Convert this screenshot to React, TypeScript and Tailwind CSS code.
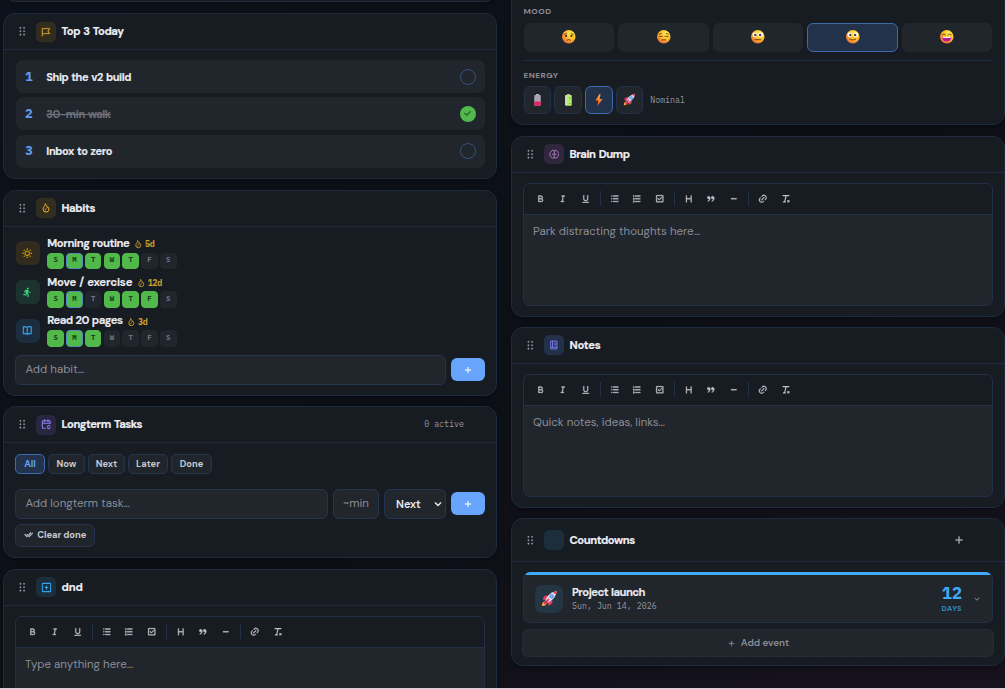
import React from "react";
import {
  RiDraggable, RiFlag2Line, RiSunLine, RiRunLine, RiBookOpenLine,
  RiCheckDoubleLine, RiBold, RiItalic, RiUnderline, RiListUnordered, RiListOrdered, RiCheckboxLine,
  RiHeading, RiDoubleQuotesR, RiSubtractLine, RiLink,
  RiAddLine, RiCheckLine, RiArrowDownSLine,
} from "react-icons/ri";

type Kids = { children?: React.ReactNode };

function Glyph({ className = "size-[10px]", children }: Kids & { className?: string }) {
  return (
    <svg viewBox="0 0 24 24" className={className} fill="none" stroke="currentColor" strokeWidth="2.4" strokeLinecap="round" strokeLinejoin="round">
      {children}
    </svg>
  );
}

function Flame({ className }: { className?: string }) {
  return (
    <Glyph className={className}>
      <path d="M10.500 2.500C11.500 6.500 5 9 5 15a7 6.800 0 0 0 14 0c0-2.500-1-4.500-2.500-5.500-.5 1-1.200 1.500-2 1.800C15 7.500 13.500 4 10.500 2.500z" />
      <path d="M12.500 13.500c-2 .8-2.800 2-2.500 3.500" />
    </Glyph>
  );
}

function CalendarEdit() {
  return (
    <Glyph className="size-[10.500px]">
      <path d="M10 21H4.500A1.500 1.500 0 0 1 3 19.500v-14A1.500 1.500 0 0 1 4.500 4h15A1.500 1.500 0 0 1 21 5.500V11M3 9.500h18M8 2v4M16 2v4" />
      <path d="M14.500 18a3.200 3.200 0 0 1 5.500-2M20.500 19a3.200 3.200 0 0 1-5.500 2" />
    </Glyph>
  );
}

function Brain() {
  return (
    <Glyph className="size-[10.500px]">
      <path strokeWidth="2" d="M12 4v16M12 4.500A3.500 3.500 0 0 0 5.500 6 4 4 0 0 0 2.500 12a4 4 0 0 0 3 6A3.500 3.500 0 0 0 12 19.500M12 4.500A3.500 3.500 0 0 1 18.500 6a4 4 0 0 1 3 6 4 4 0 0 1-3 6A3.500 3.500 0 0 1 12 19.500M7.500 12h9" />
    </Glyph>
  );
}

function Notebook() {
  return (
    <Glyph>
      <path strokeWidth="2.200" d="M5 2.500h14v19H5zM8.500 2.500v15M12.500 7.500H16M12.500 11.500H16M5 17.500h14" />
    </Glyph>
  );
}

function BoxPlus() {
  return (
    <Glyph className="size-[11px]">
      <rect x="3" y="3" width="18" height="18" rx="1.500" strokeWidth="2.200" />
      <path d="M12 9v6M9 12h6" strokeWidth="2.200" />
    </Glyph>
  );
}

function ClearFormat({ className }: { className?: string }) {
  return (
    <Glyph className={className}>
      <path d="M5 4h15M13 4l-4 16M6 20h5M17 16.500l3.500 3.500M20.500 16.500l-3.500 3.500" strokeWidth="2.800" />
    </Glyph>
  );
}

function Card({ className, children }: Kids & { className: string }) {
  return (
    <section className={"shrink-0 rounded-[12px] border border-[#1e2a3e] bg-[#171b22] shadow-[0_2px_6px_rgba(0,0,0,0.35)] " + className}>
      {children}
    </section>
  );
}

function Head({ icon, tint, title, right, tall, track }: { icon: React.ReactNode; tint: string; title: string; right?: React.ReactNode; tall?: boolean; track: string }) {
  return (
    <header className={"flex items-center border-b border-[#1e2a3e] pl-[12px] " + (tall ? "h-[43px]" : "h-[36px]")}>
      <RiDraggable className="size-[12.500px] stroke-[0.600] text-[#9a9da6]" />
      <span className={"ml-[7.500px] flex size-[20px] items-center justify-center rounded-[5px] text-[10px] " + tint}>{icon}</span>
      <h2 className={"ml-[5.500px] text-[11.200px] font-bold text-[#eceef4] [-webkit-text-stroke:0.200px] [word-spacing:1px] " + track}>{title}</h2>
      {right}
    </header>
  );
}

function Task({ n, text, done, track }: { n: number; text: string; done?: boolean; track: string }) {
  return (
    <li className="flex h-[33px] items-center rounded-[7px] bg-[#21252c] pr-[9px] pl-[9.500px]">
      <span className="w-[21.300px] font-mono text-[12.800px] leading-[16px] font-bold text-[#5f9cf0]">{n}</span>
      <span className={"flex-1 pt-px text-[11px] [word-spacing:0.800px] " + track + (done ? " font-bold text-[#6f727a] line-through" : " font-bold text-[#e8eaf0] [-webkit-text-stroke:0.150px]")}>{text}</span>
      {done ? (
        <span className="flex size-[16px] items-center justify-center rounded-full bg-[#51b84a] text-[#1b4a20]">
          <RiCheckLine className="size-[9px] stroke-1" />
        </span>
      ) : (
        <span className="size-[16px] rounded-full border-[1.300px] border-[#35507c]" />
      )}
    </li>
  );
}

const DAYS = ["S", "M", "T", "W", "T", "F", "S"];

function Habit({ icon, tint, name, streak, on, track }: { icon: React.ReactNode; tint: string; name: string; streak: string; on: number[]; track: string }) {
  return (
    <li className="flex h-[38.800px] items-start">
      <span className={"mt-[5px] flex size-[24px] items-center justify-center rounded-[6px] text-[10.500px] " + tint}>{icon}</span>
      <div className="ml-[7.800px]">
        <div className="flex h-[16.500px] items-center">
          <span className={"text-[11.300px] font-bold text-[#e8eaf0] [-webkit-text-stroke:0.150px] [word-spacing:0.800px] " + track}>{name}</span>
          <Flame className="ml-[5px] size-[8.500px] text-[#d4a72c]" />
          <span className="ml-[2px] font-mono text-[8.300px] leading-[12px] font-bold tracking-[-0.200px] text-[#c99f2c]">{streak}</span>
        </div>
        <div className="flex gap-[2.200px]">
          {DAYS.map((d, i) => (
            <span
              key={i}
              className={
                "flex size-[16.600px] items-center justify-center rounded-[4px] border font-mono text-[7.200px] font-bold " +
                (on.includes(i)
                  ? i === 1
                    ? "border-[#4d90b8] bg-[#51b84a] text-[#173f1a]"
                    : "border-[#51b84a] bg-[#51b84a] text-[#173f1a]"
                  : "border-[#21252c] bg-[#21252c] text-[#71757e]")
              }
            >
              {d}
            </span>
          ))}
        </div>
      </div>
    </li>
  );
}

function Field({ className, children }: Kids & { className: string }) {
  return <div className={"flex h-[30px] items-center rounded-[6px] border border-[#253450] bg-[#21252c] pt-px text-[11.500px] text-[#8a8e98] " + className}>{children}</div>;
}

function AddButton() {
  return (
    <button className="ml-[5px] flex h-[23.500px] w-[34px] items-center justify-center rounded-[6px] bg-[#67a5fc] text-white">
      <RiAddLine className="size-[10px] stroke-[0.500]" />
    </button>
  );
}

const TOOLS = [
  [RiBold, RiItalic, RiUnderline],
  [RiListUnordered, RiListOrdered, RiCheckboxLine],
  [RiHeading, RiDoubleQuotesR, RiSubtractLine],
  [RiLink, ClearFormat],
];

function Editor({ placeholder }: { placeholder: string }) {
  return (
    <div className="mx-[11px] mt-[10px] h-[123px] overflow-hidden rounded-[7px] border border-[#22304a] bg-[#21252c]">
      <div className="flex h-[31px] items-center border-b border-[#22304a] bg-[#171b22] pl-[5.300px]">
        {TOOLS.map((group, g) => (
          <React.Fragment key={g}>
            {g > 0 && <span className="mx-[2.800px] h-[15px] w-px bg-[#22304a]" />}
            {group.map((Icon, i) => (
              <span key={i} className="flex w-[22.500px] justify-center text-[#c0c3ca]">
                <Icon className="size-[9.500px] stroke-[0.900]" />
              </span>
            ))}
          </React.Fragment>
        ))}
      </div>
      <p className="pt-[9px] pl-[9px] text-[11.500px] leading-[16px] text-[#8a8e98]">{placeholder}</p>
    </div>
  );
}

function Face({ kind }: { kind: number }) {
  const id = "face" + kind;
  const ink = "#5c3a26";
  return (
    <svg viewBox="0 0 32 32" className="size-[15.500px]">
      <defs>
        <radialGradient id={id} cx="0.68" cy="0.25" r="0.85">
          <stop offset="0" stopColor="#fff04e" />
          <stop offset="0.55" stopColor="#ffb928" />
          <stop offset="1" stopColor="#e8603c" />
        </radialGradient>
      </defs>
      <circle cx="16" cy="16" r="14" fill={`url(#${id})`} />
      <g fill="none" stroke={ink} strokeWidth="1.8" strokeLinecap="round">
        {kind === 0 && (<><path d="M6.500 11.500l5-2.500M25.500 11.500l-5-2.500M12 23q4-3 8 0" /><circle cx="10.500" cy="14.500" r="2.400" fill={ink} stroke="none" /><circle cx="21.500" cy="14.500" r="2.400" fill={ink} stroke="none" /></>)}
        {kind === 1 && <path d="M6.5 15q3.500 2 7 0M18.500 15q3.500 2 7 0M7 10.500l4-1M25 10.500l-4-1M12 22.500h8" />}
        {(kind === 2 || kind === 3) && (<><g stroke="none"><circle cx="10" cy="12" r="5" fill="#fff" /><circle cx="22" cy="12" r="5" fill="#fff" /><circle cx="11" cy="12.5" r="2.5" fill={ink} /><circle cx="21" cy="12.5" r="2.5" fill={ink} /></g><path d={kind === 2 ? "M10 22h12" : "M10 21q6 4 12 0"} /></>)}
        {kind === 4 && (<><path d="M6.5 12q3.5-4 7 0M18.5 12q3.5-4 7 0" /><path d="M6.5 16.5h19q-1 9.500-9.500 9.500t-9.500-9.500z" fill="#b5179a" stroke="none" /><path d="M8 16.500h16v2h-16z" fill="#fff" stroke="none" /></>)}
      </g>
    </svg>
  );
}

function Battery({ low }: { low?: boolean }) {
  return (
    <svg viewBox="0 0 14 24" className="h-[12px] w-[7px]">
      <rect x="4" y="0" width="6" height="4" fill="#b9b3c6" />
      <rect x="0.500" y="2" width="13" height="21.500" rx="1.500" fill={low ? "#a9a3b4" : "#b4ec6a"} />
      {low ? <rect x="0.500" y="15" width="13" height="8.500" rx="1.500" fill="#e0245e" /> : <path d="M0.500 3v19h3V3z" fill="#d5dccf" />}
      {!low && <path d="M8 8h3M9.500 6.500v3M8 19h3" stroke="#5a9a35" strokeWidth="1" />}
    </svg>
  );
}

function Bolt() {
  return (
    <svg viewBox="0 0 16 24" className="h-[12px] w-[8px]">
      <defs><linearGradient id="bolt" x1="0" y1="0" x2="0" y2="1"><stop offset="0" stopColor="#ffb02e" /><stop offset="1" stopColor="#f0562a" /></linearGradient></defs>
      <path d="M9 0L1 13h5.500L5 24l10-14H9.500L11 0z" fill="url(#bolt)" />
    </svg>
  );
}

function Rocket({ className }: { className: string }) {
  return (
    <svg viewBox="0 0 32 32" className={className}>
      <path d="M2 30q-1-6 4-9l5 5q-3 5-9 4z" fill="#ff9f2e" />
      <path d="M12 10q-7 0-9 8l7 1zM22 20q0 7-8 9l-1-7z" fill="#ee3a6a" />
      <path d="M8 20Q13 5 30 2q-3 17-18 22z" fill="#e4dfec" />
      <path d="M23 4.500Q26 2.500 30 2q-.5 4-2.500 7z" fill="#f0415c" />
      <circle cx="20" cy="12" r="4" fill="#4a7fd6" /><circle cx="20" cy="12" r="2.200" fill="#8fc7f5" />
      <path d="M7 25l7-7" stroke="#e02f68" strokeWidth="3.500" strokeLinecap="round" />
    </svg>
  );
}

function Left() {
  const pill = "flex h-[20px] items-center justify-center rounded-[5px] border ";
  const idle = "border-[#253450] bg-[#20242b] ";
  return (
    <div className="flex w-[494px] shrink-0 flex-col">
      <Card className="-mt-[38px] h-[40px]" />
      <Card className="mt-[11px] h-[166px]">
        <Head icon={<RiFlag2Line className="stroke-[0.500]" />} tint="bg-[#332d20] text-[#d4a72c]" title="Top 3 Today" track="tracking-[-0.430px]" />
        <ol className="flex flex-col gap-[4.300px] px-[11.500px] pt-[10px]">
          <Task n={1} text="Ship the v2 build" track="tracking-[-0.420px]" />
          <Task n={2} text="30-min walk" done track="tracking-[-0.380px]" />
          <Task n={3} text="Inbox to zero" track="tracking-[-0.400px]" />
        </ol>
      </Card>
      <Card className="mt-[10.500px] h-[206px]">
        <Head icon={<Flame />} tint="bg-[#332d20] text-[#e5b02c]" title="Habits" track="tracking-[-0.380px]" />
        <ul className="h-[128px] px-[11.500px] pt-[9.500px]">
          <Habit icon={<RiSunLine className="stroke-[0.500]" />} tint="bg-[#302b1d] text-[#d9a514]" name="Morning routine" streak="5d" on={[0, 1, 2, 3, 4]} track="tracking-[-0.450px]" />
          <Habit icon={<RiRunLine className="stroke-[0.500]" />} tint="bg-[#1d332e] text-[#3ddc84]" name="Move / exercise" streak="12d" on={[0, 1, 3, 4, 5]} track="tracking-[-0.200px]" />
          <Habit icon={<RiBookOpenLine className="stroke-[0.500]" />} tint="bg-[#1b2d3e] text-[#3fa9f0]" name="Read 20 pages" streak="3d" on={[0, 1, 2]} track="tracking-[-0.550px]" />
        </ul>
        <div className="flex items-center px-[11px]">
          <Field className="flex-1 pl-[9.500px]">Add habit…</Field>
          <AddButton />
        </div>
      </Card>
      <Card className="mt-[10.500px] h-[152px]">
        <Head
          icon={<CalendarEdit />}
          tint="bg-[#29273f] text-[#8f7df0]"
          title="Longterm Tasks"
          track="tracking-[-0.450px]"
          right={<span className="mr-[32px] ml-auto font-mono text-[8.300px] text-[#9598a1]">0 active</span>}
        />
        <div className="flex gap-[3px] px-[11px] pt-[10.500px] text-[9.300px] leading-[14px] font-bold text-[#c5c8cf]">
          <span className={pill + "w-[30px] border-[#3d6cab] bg-[#22334b] text-[#62a2f8]"}>All</span>
          <span className={pill + idle + "w-[37px]"}>Now</span>
          <span className={pill + idle + "w-[37px]"}>Next</span>
          <span className={pill + idle + "w-[40px]"}>Later</span>
          <span className={pill + idle + "w-[41px]"}>Done</span>
        </div>
        <div className="mt-[15px] flex items-center px-[11px]">
          <Field className="flex-1 pl-[9.500px]">Add longterm task…</Field>
          <Field className="ml-[5px] w-[46px] justify-center">~min</Field>
          <Field className="ml-[5px] w-[62px] justify-between pr-[2px] pl-[11px]">
            <span className="text-[11px] font-semibold text-[#e8eaf0]">Next</span>
            <svg viewBox="0 0 10 10" className="size-[10px]"><path d="M2 3.500l3 3 3-3" fill="none" stroke="#e8eaf0" strokeWidth="1.500" /></svg>
          </Field>
          <AddButton />
        </div>
        <div className="mt-[5px] ml-[11px] flex h-[23px] w-[80px] items-center justify-center gap-[4px] rounded-[6px] border border-[#253450] bg-[#20242b] text-[9.400px] font-bold tracking-[-0.100px] text-[#c5c8cf]">
          <RiCheckDoubleLine className="size-[9.500px] stroke-[1.200]" />
          Clear done
        </div>
      </Card>
      <Card className="mt-[10.600px] h-[180px]">
        <Head icon={<BoxPlus />} tint="bg-[#1b2e3c] text-[#35a2ea]" title="dnd" track="tracking-[-0.100px]" />
        <Editor placeholder="Type anything here…" />
      </Card>
    </div>
  );
}

function Right() {
  const box = "flex size-[27.500px] items-center justify-center rounded-[6px] border ";
  return (
    <div className="flex w-[494px] shrink-0 flex-col">
      <Card className="-mt-[20px] h-[145px] px-[11.500px] pt-[26px]">
        <div className="text-[8.300px] leading-[10px] font-bold tracking-[0.450px] text-[#8a8d96]">MOOD</div>
        <div className="mt-[5.500px] flex gap-[4px]">
          {[0, 1, 2, 3, 4].map((k) => (
            <span key={k} className={"flex h-[29px] flex-1 items-center justify-center rounded-[6px] border " + (k === 3 ? "border-[#3d6aa8] bg-[#22324a]" : "border-[#21252c] bg-[#21252c]")}>
              <Face kind={k} />
            </span>
          ))}
        </div>
        <div className="mt-[8.500px] border-t border-[#1e2d47] pt-[10px] text-[8.300px] leading-[10px] font-bold tracking-[0.450px] text-[#8a8d96]">ENERGY</div>
        <div className="mt-[5px] flex items-center gap-[3.300px]">
          <span className={box + "border-[#22304a] bg-[#21252c]"}><Battery low /></span>
          <span className={box + "border-[#22304a] bg-[#21252c]"}><Battery /></span>
          <span className={box + "border-[#3d6aa8] bg-[#22324a]"}><Bolt /></span>
          <span className={box + "border-[#22304a] bg-[#21252c]"}><Rocket className="size-[13px]" /></span>
          <span className="ml-[3.500px] font-mono text-[8.300px] text-[#9598a1]">Nominal</span>
        </div>
      </Card>
      <Card className="mt-[10.500px] h-[181px]">
        <Head icon={<Brain />} tint="bg-[#30273f] text-[#b580c4]" title="Brain Dump" track="tracking-[-0.450px]" />
        <Editor placeholder="Park distracting thoughts here…" />
      </Card>
      <Card className="mt-[10.200px] h-[181px]">
        <Head icon={<Notebook />} tint="bg-[#22304a] text-[#7d7df0]" title="Notes" track="tracking-[-0.250px]" />
        <Editor placeholder="Quick notes, ideas, links…" />
      </Card>
      <Card className="mt-[10.300px] h-[148px]">
        <Head tall icon={null} tint="bg-[#1c2d3c]" title="Countdowns" track="tracking-[-0.430px]" right={<RiAddLine className="mr-[39px] ml-auto size-[12px] stroke-[0.500] text-[#b4b7be]" />} />
        <div className="mx-[11px] mt-[10px] flex h-[51px] flex-col overflow-hidden rounded-[7px] border border-t-0 border-[#22304a] bg-[#21252c]">
          <div className="h-[3.500px] shrink-0 bg-[#3dabf5]" />
          <div className="flex flex-1 items-center pl-[11px]">
            <span className="flex size-[28px] items-center justify-center rounded-[7px] bg-[#243544]"><Rocket className="size-[17px]" /></span>
            <div className="ml-[9px] flex-1 pt-[1px]">
              <div className="text-[11.200px] leading-[13px] font-bold tracking-[-0.500px] text-[#e8eaf0] [-webkit-text-stroke:0.150px] [word-spacing:0.800px]">Project launch</div>
              <div className="font-mono text-[8.300px] leading-[13px] text-[#9598a1]">Sun, Jun 14, 2026</div>
            </div>
            <div className="text-right">
              <div className="font-mono text-[16.800px] leading-[16px] font-bold text-[#3dabf5]">12</div>
              <div className="mt-[3px] text-[7.400px] leading-[9px] font-bold tracking-[0.500px] text-[#318ac6]">DAYS</div>
            </div>
            <RiArrowDownSLine className="mr-[10px] ml-[10px] size-[10px] text-[#858992]" />
          </div>
        </div>
        <div className="mx-[10px] mt-[6.500px] flex h-[28px] items-center justify-center gap-[5px] rounded-[6px] border border-dashed border-[#2b303b] bg-[#21252c] text-[9.800px] font-semibold text-[#8a8d96]">
          <RiAddLine className="size-[9px] stroke-[0.500]" />
          Add event
        </div>
      </Card>
    </div>
  );
}

export default function App() {
  return (
    <main className="h-[689px] w-[1005px] overflow-hidden border-b border-[#d9d5dc] bg-linear-to-br from-[#0d131c] via-[#0d1017] to-[#17121e] font-['DM_Sans',Inter,sans-serif] [--font-mono:'IBM_Plex_Mono','Liberation_Mono',monospace]">
      <div className="flex h-[688px] items-start gap-[14px] overflow-hidden pl-[3px]">
        <Left />
        <Right />
      </div>
    </main>
  );
}
